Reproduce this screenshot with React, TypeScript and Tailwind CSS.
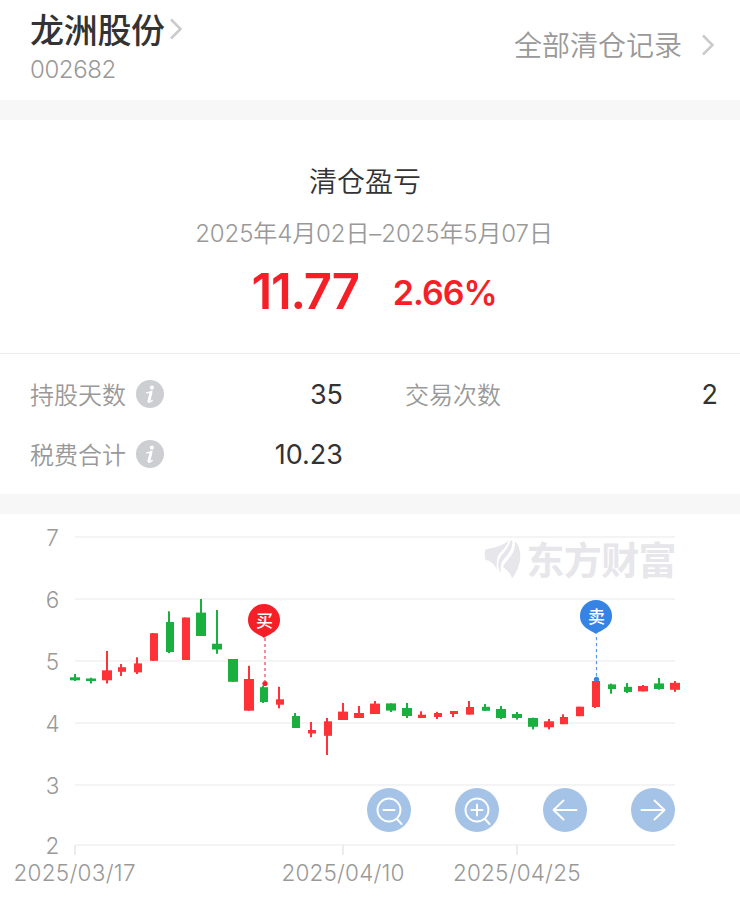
import React from 'react';

type Candle = {
    x: number;
    w: number;
    top: number;
    bottom: number;
    high: number;
    low: number;
    up: boolean;
};

const RED = '#ff3238';
const GREEN = '#1ab040';

// x, width, body top, body bottom, high, low, up
const rows: [number, number, number, number, number, number, boolean][] = [
    [70, 10, 677.3, 680.3, 674, 681, false],
    [86, 10, 678.5, 681, 677.7, 683.5, false],
    [102, 10, 670.3, 680.3, 651, 683.5, true],
    [118, 8, 667.2, 671.8, 664, 676, true],
    [134, 8, 663.4, 672.4, 657.3, 674, true],
    [150, 8, 633.2, 660.8, 633.2, 660.8, true],
    [166, 8, 622, 652, 611.3, 653.2, false],
    [182, 8, 617.5, 660, 617.5, 660, true],
    [196, 10, 612.6, 636, 599, 636, false],
    [212, 10, 643.7, 649.5, 610, 653.8, false],
    [228, 10, 659, 681.8, 659, 681.8, false],
    [244, 10, 679, 710.7, 665.8, 710.7, true],
    [260, 8, 687.2, 702, 685.7, 703, false],
    [276, 8, 699.3, 704.7, 686.8, 708.3, true],
    [292, 8, 716, 728, 713, 728, false],
    [308, 8, 730, 733.5, 722, 737.2, true],
    [324, 8, 721.3, 735.8, 718, 755, true],
    [338, 10, 711.6, 720, 703, 720, true],
    [354, 10, 713, 718, 706, 718, true],
    [370, 10, 703.6, 714, 701, 714, true],
    [386, 10, 703.4, 710.6, 703.4, 712, false],
    [402, 10, 708, 716, 703, 718, false],
    [418, 8, 714.7, 718, 711.3, 718, true],
    [434, 8, 713, 717, 711.8, 719, true],
    [450, 8, 711, 714, 711, 717, true],
    [466, 8, 707, 714.6, 701, 714.6, true],
    [482, 8, 706.8, 710.8, 704, 710.8, false],
    [496, 10, 709, 718, 706, 719, false],
    [512, 10, 714, 718, 712, 719.6, false],
    [528, 10, 718, 726.8, 717.6, 729.4, false],
    [544, 10, 721.3, 727.3, 719, 729.4, true],
    [560, 8, 717, 724.2, 714.3, 724.2, true],
    [576, 8, 706.7, 716.2, 706.7, 716.2, true],
    [592, 8, 681, 707, 681, 708, true],
    [608, 8, 684.4, 689, 683.6, 693.7, false],
    [624, 8, 686.8, 692, 683, 693, false],
    [638, 10, 686, 691.4, 685, 691.4, true],
    [654, 10, 683.4, 689, 678, 689.7, false],
    [670, 10, 682.8, 689.8, 681, 691.8, true],
];

const candles: Candle[] = rows.map(([x, w, top, bottom, high, low, up]) => ({ x, w, top, bottom, high, low, up }));

const priceLines = [
    { label: '7', y: 537 },
    { label: '6', y: 599 },
    { label: '5', y: 661 },
    { label: '4', y: 723 },
    { label: '3', y: 785 },
    { label: '2', y: 845 },
];

const dates = [
    { label: '2025/03/17', x: 75, left: 13.5, width: 122 },
    { label: '2025/04/10', x: 343, left: 281.5, width: 123 },
    { label: '2025/04/25', x: 517, left: 453, width: 127.5 },
];

const Chevron = () => (
    <svg width="14" height="24" viewBox="0 0 14 24" fill="none" stroke="#cbcbcb" strokeWidth="2.6">
        <path d="M2 2.5 11.5 12 2 21.5" />
    </svg>
);

const InfoIcon = () => (
    <svg width="28" height="28" viewBox="0 0 28 28">
        <circle cx="14" cy="14" r="14" fill="#cdced2" />
        <circle cx="15.9" cy="7.6" r="2.1" fill="#fff" />
        <path d="M10.8 12.8c1.6-.2 3.1-.6 4.8-1.5l-2.6 9.8c-.3 1.4.9 1.3 3.2-.6" fill="none" stroke="#fff" strokeWidth="1.4" strokeLinecap="round" />
        <path d="M15 12.4 12.8 21.4" stroke="#fff" strokeWidth="2.8" strokeLinecap="round" />
    </svg>
);

const Pin = ({ x, y, color, label }: { x: number; y: number; color: string; label: string }) => (
    <g>
        <path
            d={`M${x} ${y + 18}C${x - 4} ${y + 14.5} ${x - 16} ${y + 12} ${x - 16} ${y}a16 16 0 0 1 32 0C${x + 16} ${y + 12} ${x + 4} ${y + 14.5} ${x} ${y + 18}Z`}
            fill={color}
        />
        <text x={x + 0.5} y={y + 6.5} textAnchor="middle" fontSize="17" fill="#fff" className="font-medium">
            {label}
        </text>
    </g>
);

const RoundButton = ({ label, children }: { label: string; children: React.ReactNode }) => (
    <button type="button" aria-label={label} className="h-11 w-11 rounded-full bg-[#a4c3e6]">
        <svg width="44" height="44" viewBox="0 0 44 44" fill="none" stroke="#fff" strokeWidth="1.9" strokeLinecap="round" strokeLinejoin="round">
            {children}
        </svg>
    </button>
);

const Chart = () => (
    <div className="relative h-[387px]">
        <svg width="740" height="387" viewBox="0 514 740 387">
            {priceLines.map((line) => (
                <g key={line.label}>
                    <rect x="75" y={line.y - 1} width="600" height="2" fill="#f4f4f5" />
                    <text x="52.5" y={line.y + 8.5} textAnchor="middle" fontSize="22.5" fill="#999" className="font-[350]">
                        {line.label}
                    </text>
                </g>
            ))}
            {dates.map((date) => (
                <g key={date.label}>
                    <rect x={date.x - 1} y="845" width="2" height="10" fill="#ececee" />
                    <text x={date.left} y="881" textLength={date.width} fontSize="22.5" fill="#999" className="font-[350]">
                        {date.label}
                    </text>
                </g>
            ))}

            {/* Watermark */}
            <g fill="#e6e6eb">
                <path d="M485 550C492 547 500 548 508.5 540.5C507 546 503 550 499 554C496.500 558 497 565 496.500 570C495 563 488 560 485.500 560C484.500 556 484.500 553 485 550Z" />
                <path d="M510.500 540L512.500 541C512.500 551 506 556 502.500 561C500 565 501 569 500.500 573C497.500 568 497.500 561 501 556C505 551 509 547 510.500 540Z" />
                <path d="M515 541C523 550 522 565 512 578.500C510.500 573 507 570 503 567C506 559 516 556 515 541Z" />
                <text x="526.5" y="573.5" fontSize="38" textLength="150" className="font-bold">
                    东方财富
                </text>
            </g>

            {candles.map((c) => {
                const wickX = c.w === 10 ? c.x + 4 : c.x + 2;
                return (
                    <g key={c.x} fill={c.up ? RED : GREEN}>
                        <rect x={c.x} y={c.top} width={c.w} height={c.bottom - c.top} />
                        <rect x={wickX} y={c.high} width="2" height={c.low - c.high} />
                    </g>
                );
            })}

            <path d="M265 638V681" stroke="#f98b90" strokeWidth="2" strokeDasharray="3 3" />
            <circle cx="265" cy="683.5" r="2.6" fill="#f3242c" />
            <Pin x={264} y={620} color="#f51f27" label="买" />
            <path d="M596.5 637V677" stroke="#5b9be6" strokeWidth="1.2" strokeDasharray="3.2 2.8" />
            <circle cx="596.5" cy="679.3" r="2.6" fill="#3583e3" />
            <Pin x={596} y={616} color="#3583e3" label="卖" />
        </svg>

        {/* Zoom and pan controls float over the plot */}
        <div className="absolute top-[274px] right-[65px] flex gap-11">
            <RoundButton label="缩小">
                <circle cx="22" cy="22" r="11.5" />
                <path d="M16.5 22h11M30 31l4.5 5" />
            </RoundButton>
            <RoundButton label="放大">
                <circle cx="22" cy="22" r="11.5" />
                <path d="M16.5 22h11M22 16.5v11M30 31l4.5 5" />
            </RoundButton>
            <RoundButton label="左移">
                <path d="M33.5 22h-23M20.5 12.5 10.5 22l10 9.5" />
            </RoundButton>
            <RoundButton label="右移">
                <path d="M10.5 22h23M23.5 12.5 33.5 22l-10 9.5" />
            </RoundButton>
        </div>
    </div>
);

const App = () => {
    return (
        <div className="h-[901px] w-[740px] overflow-hidden bg-white font-['Inter','Noto_Sans_CJK_SC',sans-serif] text-[#333]">
            <header className="flex h-[100px] justify-between pr-[25px] pl-[30px]">
                <div className="pt-2">
                    <div className="flex h-[42px] items-center gap-1">
                        <h1 className="pt-1 text-[34px] leading-10 font-medium tracking-[-0.3px]">龙洲股份</h1>
                        <Chevron />
                    </div>
                    <div className="pt-1 text-2xl leading-8 font-[350] tracking-[-0.4px] text-[#999]">002682</div>
                </div>
                <div className="flex h-[90px] items-center gap-[19px] text-[28px] font-[350] text-[#999]">
                    <span className="pt-px">全部清仓记录</span>
                    <Chevron />
                </div>
            </header>
            <div className="h-5 bg-[#f7f7f7]" />

            <section className="flex h-[234px] flex-col items-center border-b border-[#ececec] pt-[42px]">
                <h2 className="mr-2.5 text-[28px] leading-10 font-[350]">清仓盈亏</h2>
                <p className="mt-4 ml-2 text-[24px] leading-8 font-[350] tracking-[-0.1px] whitespace-nowrap text-[#999]">
                    2025年4月02日–2025年5月07日
                </p>
                <div className="ml-2 flex items-center gap-[34px] leading-[76px] text-[#f51f27]">
                    <span className="pt-[3px] text-[49px] font-semibold tracking-[-1.2px]">11.77</span>
                    <span className="pt-[5px] text-[34px] font-semibold tracking-[-1px]">2.66%</span>
                </div>
            </section>

            <section className="grid h-[140px] grid-cols-[313px_313px] content-start gap-x-[62px] pt-[10px] pl-[30px] text-2xl">
                <div className="flex h-[60px] items-center">
                    <span className="mr-2.5 pt-[3px] font-[350] text-[#999]">持股天数</span>
                    <InfoIcon />
                    <span className="ml-auto pt-0.5 text-[27px]">35</span>
                </div>
                <div className="flex h-[60px] items-center">
                    <span className="pt-[3px] font-[350] text-[#999]">交易次数</span>
                    <span className="ml-auto pt-0.5 text-[27px]">2</span>
                </div>
                <div className="flex h-[60px] items-center">
                    <span className="mr-2.5 pt-[3px] font-[350] text-[#999]">税费合计</span>
                    <InfoIcon />
                    <span className="ml-auto pt-0.5 text-[27px]">10.23</span>
                </div>
            </section>
            <div className="h-5 bg-[#f7f7f7]" />

            <Chart />
        </div>
    );
};

export default App;
